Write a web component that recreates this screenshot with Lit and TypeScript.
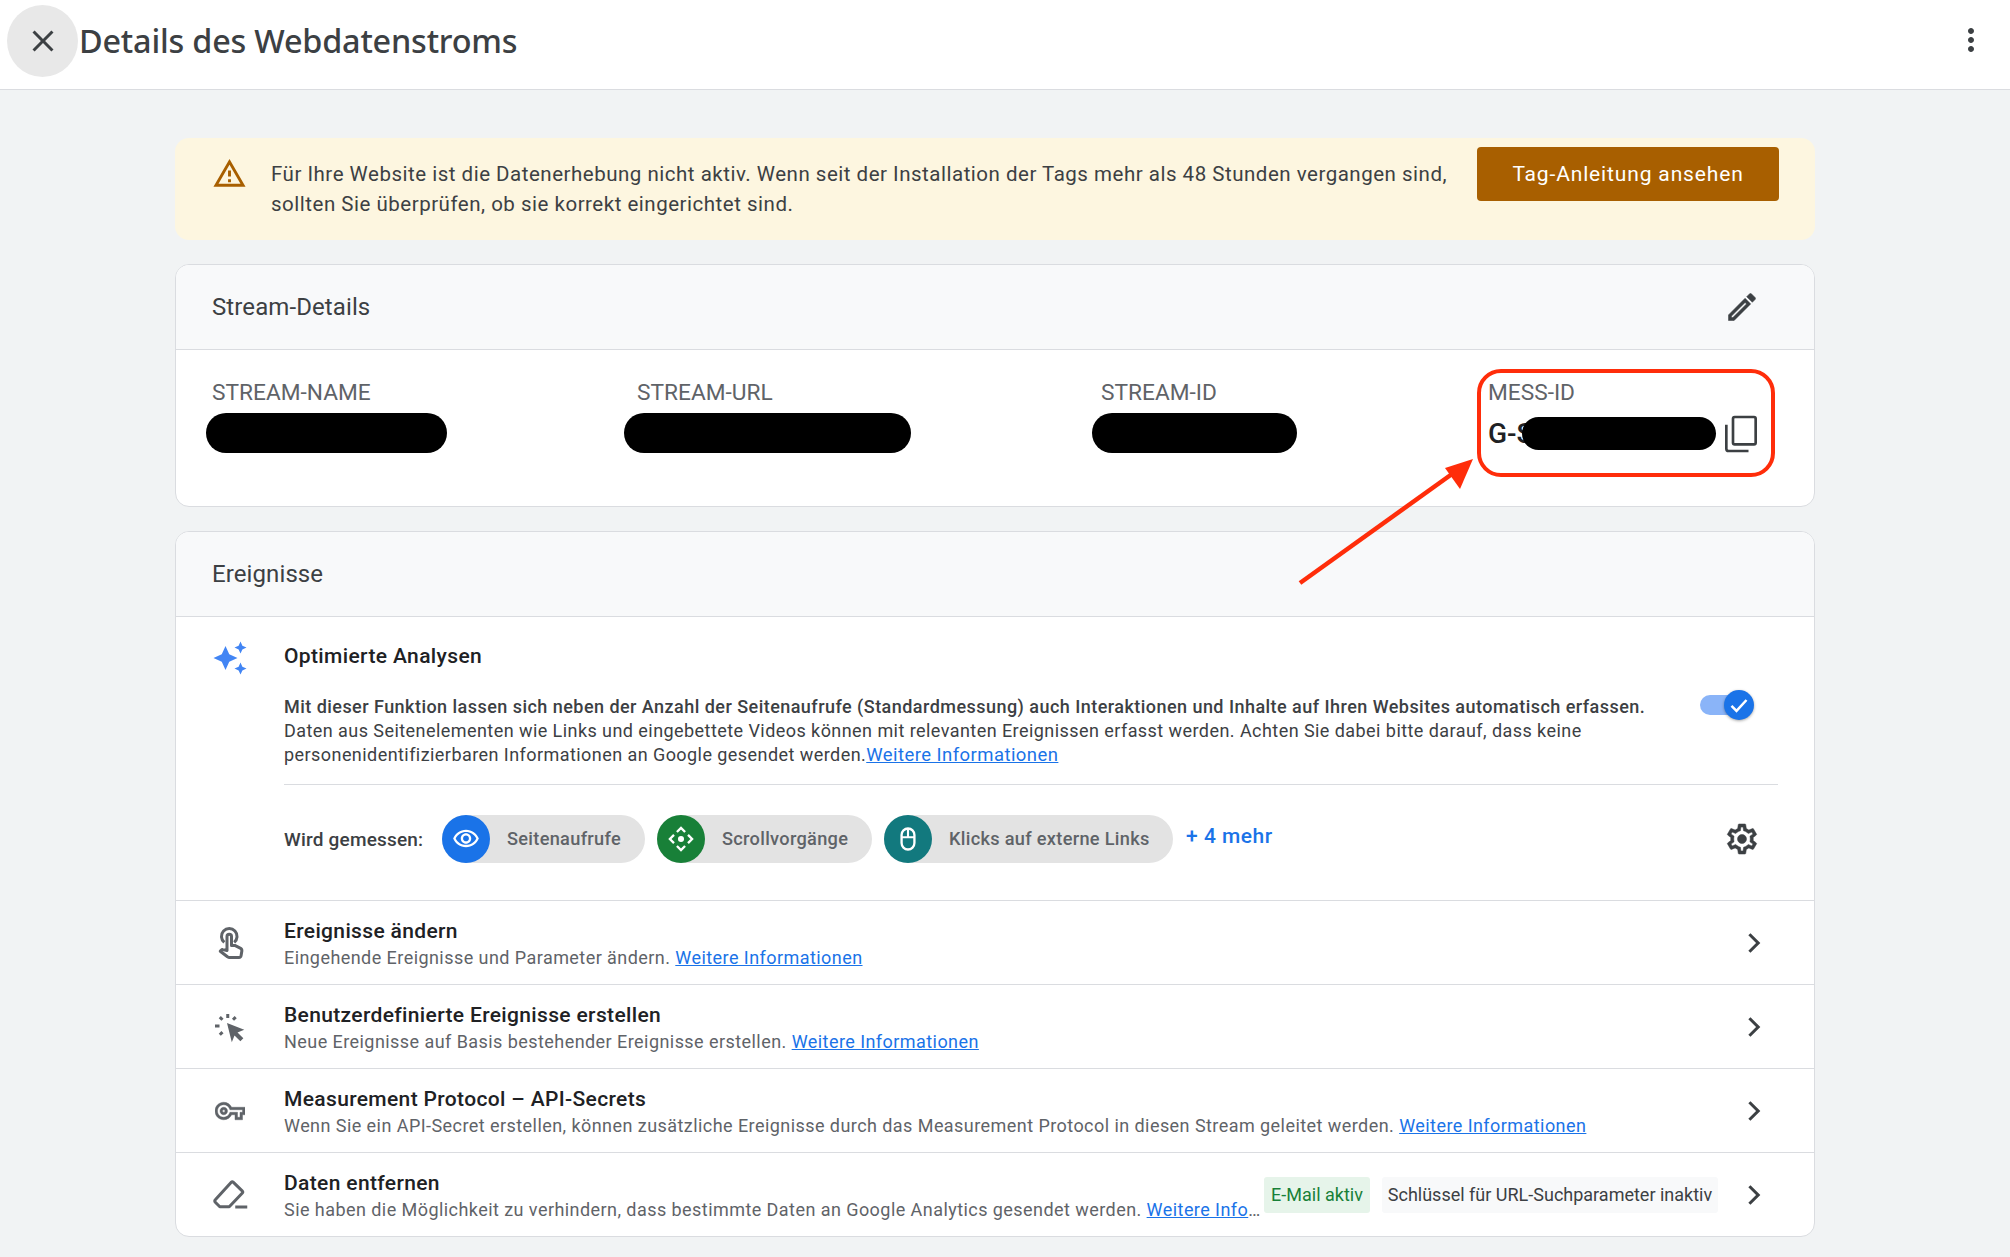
import { LitElement, html, css, svg } from "lit";
import { customElement } from "lit/decorators.js";

const P: Record<string, string> = {
  close: "M19 6.41L17.59 5 12 10.59 6.41 5 5 6.41 10.59 12 5 17.59 6.41 19 12 13.41 17.59 19 19 17.59 13.41 12z",
  warn: "M12 5.99L19.53 19H4.47L12 5.99M12 2L1 21h22L12 2zm1 14h-2v2h2v-2zm0-6h-2v4h2v-4z",
  edit: "M14.06 9.02l.92.92L5.92 19H5v-.92l9.06-9.06M17.66 3c-.25 0-.51.1-.7.29l-1.83 1.83 3.75 3.75 1.83-1.83c.39-.39.39-1.02 0-1.41l-2.34-2.34c-.2-.2-.45-.29-.71-.29zm-3.6 3.19L3 17.25V21h3.75L17.81 9.94l-3.75-3.75z",
  spark: "M19 9l1.25-2.75L23 5l-2.75-1.25L19 1l-1.25 2.75L15 5l2.75 1.25L19 9zm-7.5.5L9 4 6.5 9.5 1 12l5.5 2.5L9 20l2.5-5.5L17 12l-5.5-2.5zM19 15l-1.25 2.75L15 19l2.75 1.25L19 23l1.25-2.75L23 19l-2.75-1.25L19 15z",
  eye: "M12 6c3.79 0 7.17 2.13 8.82 5.5C19.17 14.87 15.79 17 12 17s-7.17-2.13-8.82-5.5C4.83 8.13 8.21 6 12 6m0-2C7 4 2.73 7.11 1 11.5 2.73 15.89 7 19 12 19s9.27-3.11 11-7.5C21.27 7.11 17 4 12 4zm0 5c1.38 0 2.5 1.12 2.5 2.5S13.38 14 12 14s-2.5-1.12-2.5-2.5S10.62 9 12 9m0-2c-2.48 0-4.5 2.02-4.5 4.5S9.52 16 12 16s4.5-2.02 4.5-4.5S14.48 7 12 7z",
  key: "M22 19h-6v-4h-2.68c-1.14 2.42-3.6 4-6.32 4-3.86 0-7-3.14-7-7s3.14-7 7-7c2.72 0 5.17 1.58 6.32 4H24v6h-2v4zm-4-2h2v-4h2v-2H11.94l-.23-.67C11.01 8.34 9.11 7 7 7c-2.76 0-5 2.24-5 5s2.24 5 5 5c2.11 0 4.01-1.34 4.71-3.33l.23-.67H18v4zM7 15c-1.65 0-3-1.35-3-3s1.35-3 3-3 3 1.35 3 3-1.35 3-3 3zm0-4c-.55 0-1 .45-1 1s.45 1 1 1 1-.45 1-1-.45-1-1-1z",
  gear: "M19.43 12.98c.04-.32.07-.64.07-.98 0-.34-.03-.66-.07-.98l2.11-1.65c.19-.15.24-.42.12-.64l-2-3.46c-.09-.16-.26-.25-.44-.25-.06 0-.12.01-.17.03l-2.49 1c-.52-.4-1.08-.73-1.69-.98l-.38-2.65C14.46 2.18 14.25 2 14 2h-4c-.25 0-.46.18-.49.42l-.38 2.65c-.61.25-1.17.59-1.69.98l-2.49-1c-.06-.02-.12-.03-.18-.03-.17 0-.34.09-.43.25l-2 3.46c-.13.22-.07.49.12.64l2.11 1.65c-.04.32-.07.65-.07.98 0 .33.03.66.07.98l-2.11 1.65c-.19.15-.24.42-.12.64l2 3.46c.09.16.26.25.44.25.06 0 .12-.01.17-.03l2.49-1c.52.4 1.08.73 1.69.98l.38 2.65c.03.24.24.42.49.42h4c.25 0 .46-.18.49-.42l.38-2.65c.61-.25 1.17-.59 1.69-.98l2.49 1c.06.02.12.03.18.03.17 0 .34-.09.43-.25l2-3.46c.12-.22.07-.49-.12-.64l-2.11-1.65zm-1.98-1.71c.04.31.05.52.05.73 0 .21-.02.43-.05.73l-.14 1.13.89.7 1.08.84-.7 1.21-1.27-.51-1.04-.42-.9.68c-.43.32-.84.56-1.25.73l-1.06.43-.16 1.13-.2 1.35h-1.4l-.19-1.35-.16-1.13-1.06-.43c-.43-.18-.83-.41-1.23-.71l-.91-.7-1.06.43-1.27.51-.7-1.21 1.08-.84.89-.7-.14-1.13c-.03-.31-.05-.54-.05-.74s.02-.43.05-.73l.14-1.13-.89-.7-1.08-.84.7-1.21 1.27.51 1.04.42.9-.68c.43-.32.84-.56 1.25-.73l1.06-.43.16-1.13.2-1.35h1.39l.19 1.35.16 1.13 1.06.43c.43.18.83.41 1.23.71l.91.7 1.06-.43 1.27-.51.7 1.21-1.07.85-.89.7.14 1.13zM12 9a3 3 0 100 6 3 3 0 000-6z",
  chev: "M8.6 4.6L7 6.2 12.8 12 7 17.8l1.6 1.6L16 12z",
  more: "M12 8c1.1 0 2-.9 2-2s-.9-2-2-2-2 .9-2 2 .9 2 2 2zm0 2c-1.1 0-2 .9-2 2s.9 2 2 2 2-.9 2-2-.9-2-2-2zm0 6c-1.1 0-2 .9-2 2s.9 2 2 2 2-.9 2-2-.9-2-2-2z",
};

const ico = (name: string, size: number, color: string) => html`<svg width=${size} height=${size} viewBox="0 0 24 24" fill=${color} aria-hidden="true"><path d=${P[name]}></path></svg>`;
const icoBold = (name: string, size: number, color: string) => html`<svg width=${size} height=${size} viewBox="0 0 24 24" fill=${color} stroke=${color} stroke-width=".35" aria-hidden="true"><path d=${P[name]}></path></svg>`;

const copyIcon = html`<svg class="copy" width="40" height="40" viewBox="0 0 24 24" fill="none" stroke="#3c4043" stroke-width="1.6"><rect x="7.2" y="1.8" width="13.6" height="16.4" rx="1"></rect><path d="M3.2 6.5V20.8c0 .8.6 1.4 1.4 1.4H16.5"></path></svg>`;
const scrollIcon = html`<svg width="28" height="28" viewBox="0 0 24 24" fill="none" stroke="#fff" stroke-width="2"><path d="M8.5 6L12 2.5 15.5 6M8.5 18l3.5 3.5 3.5-3.5M6 8.5L2.5 12 6 15.5M18 8.5l3.5 3.5-3.5 3.5"></path><circle cx="12" cy="12" r="2.6" fill="#fff" stroke="none"></circle></svg>`;
const mouseIcon = html`<svg width="28" height="28" viewBox="0 0 24 24" fill="none" stroke="#fff" stroke-width="2"><rect x="6.5" y="3" width="11" height="18" rx="5.5"></rect><path d="M12 3v7M6.5 10.5h11" stroke-width="1.8"></path></svg>`;
const touchIcon = html`<svg width="36" height="36" viewBox="0 0 24 24" fill="none" stroke="#5f6368" stroke-width="2" stroke-linejoin="round" aria-hidden="true"><path d="M8.2 11.6a5.2 5.2 0 1 1 6.6 0"></path><path d="M10 7.6a1.5 1.5 0 0 1 3 0v6h2.2l3.6 1.8c.8.4 1.2 1.2 1.1 2l-.5 3c-.1.7-.7 1.2-1.4 1.2H11.3c-.4 0-.7-.1-1-.4L5.5 17.5l.6-.7c.3-.3.7-.5 1.1-.4l2.8.6z"></path></svg>`;
const clickIcon = html`<svg width="36" height="36" viewBox="0 0 24 24" fill="#5f6368" aria-hidden="true"><path d="M10 9.4l11.5 4.4-4.5 1.8 3.9 3.9-2 2-3.9-3.9-1.8 4.5z"></path><g stroke="#5f6368" stroke-width="2" fill="none"><path d="M10.5 3.4v2.6M5.2 5.4l1.8 1.8M2 11.4h3M5.2 17.2l1.8-1.8M15.8 5.4L14 7.2"></path></g></svg>`;
const eraseIcon = html`<svg width="36" height="36" viewBox="0 0 24 24" fill="none" stroke="#5f6368" stroke-width="2" aria-hidden="true"><path d="M14.3 3.6l5.8 5.6c.5.5.5 1.1 0 1.6l-8.6 9H5.2l-3-3c-.5-.5-.5-1.1 0-1.6L12.7 3.6c.5-.4 1.1-.4 1.6 0z" stroke-linejoin="round"></path><path d="M15.5 20h8" stroke-width="2"></path></svg>`;

const arrow = svg`<line x1="1300" y1="583" x2="1452" y2="474" stroke="#ff2d0a" stroke-width="4.5"></line><polygon points="1473,459 1460,489 1445,468" fill="#ff2d0a"></polygon>`;

@customElement("app-root")
export class AppRoot extends LitElement {
  static styles = css`
    :host { display: block; position: relative; width: 2010px; height: 1257px; overflow: hidden; background: #f1f3f4; font-family: Roboto, "Liberation Sans", sans-serif; color: #3c4043; }
    * { box-sizing: border-box; }
    svg { display: block; flex: none; }
    a { color: #1a73e8; text-decoration: underline; }
    .top { height: 90px; background: #fff; border-bottom: 1px solid #dadce0; display: flex; align-items: flex-start; padding-left: 7px; padding-right: 21px; }
    .closebtn { width: 71px; height: 72px; margin-top: 5px; border-radius: 50%; background: #e8e8e8; display: flex; align-items: center; justify-content: center; flex: none; }
    .title { font-family: "Noto Sans", sans-serif; font-size: 32.4px; font-weight: 500; line-height: 80px; color: #3c4043; margin-left: 1px; flex: 1; letter-spacing: -.2px; }
    .more { margin-top: 22px; }
    .main { padding: 48px 195px 0 175px; display: flex; flex-direction: column; gap: 24px; }
    .banner { height: 102px; background: #fdf6e0; border-radius: 14px; display: flex; align-items: flex-start; padding: 9px 36px 0 37px; }
    .banner .warn { margin-top: 9px; }
    .banner p { margin: 12px 0 0 24px; flex: 1; font-size: 20.5px; line-height: 30px; letter-spacing: .51px; color: #3c4043; white-space: nowrap; }
    .btn { width: 302px; height: 54px; background: #a85f00; color: #fff; border-radius: 4px; font-size: 21px; font-weight: 400; letter-spacing: .85px; display: flex; align-items: center; justify-content: center; }
    .card { background: #fff; border: 1px solid #dadce0; border-radius: 14px; overflow: hidden; }
    .cardhead { height: 85px; background: #f8f9fa; border-bottom: 1px solid #dadce0; display: flex; align-items: center; padding: 0 54px 0 36px; font-size: 24px; letter-spacing: .1px; color: #3c4043; justify-content: space-between; }
    .fields { position: relative; height: 156px; display: flex; padding: 29px 0 0 36px; }
    .field { flex: none; }
    .f1 { width: 425px; } .f2 { width: 464px; } .f3 { width: 387px; }
    .label { font-size: 22.7px; line-height: 27px; color: #5f6368; letter-spacing: 0; }
    .pill { background: #000; height: 40px; border-radius: 20px; margin-top: 7px; }
    .p1 { width: 241px; margin-left: -6px; }
    .p2 { width: 287px; margin-left: -13px; }
    .p3 { width: 205px; margin-left: -9px; }
    .messrow { display: flex; align-items: center; margin-top: 9px; height: 36px; font-size: 28px; font-weight: 500; color: #202124; }
    .p4 { width: 194px; height: 33px; margin: 0 5px 0 -12px; flex: none; }
    .copy { margin-top: 2px; }
    .redbox { position: absolute; left: 1301px; top: 19px; width: 298px; height: 108px; border: 4px solid #ff2d0a; border-radius: 24px; }
    .opti { display: flex; padding: 0 36px 0 36px; height: 283px; }
    .opti .ic { width: 72px; flex: none; padding-top: 23px; }
    .opti .body { flex: 1; }
    .opti h3 { margin: 0; font-size: 21px; font-weight: 500; line-height: 24px; padding-top: 27px; color: #202124; letter-spacing: .37px; }
    .opti .txtwrap { display: flex; height: 90px; border-bottom: 1px solid #dadce0; margin-top: 27px; }
    .opti .txt { flex: 1; font-size: 18px; line-height: 24px; letter-spacing: .44px; color: #3c4043; white-space: nowrap; }
    .opti .txt a { font-size: 18.5px; }
    .opti b { font-weight: 500; letter-spacing: .46px; }
    .toggle { position: relative; width: 45px; height: 20px; background: #8ab4f8; border-radius: 10px; margin: 0 33px 0 0; }
    .knob { position: absolute; right: -9px; top: -5px; width: 30px; height: 30px; border-radius: 50%; background: #1a73e8; box-shadow: 0 1px 3px rgba(0,0,0,.35); display: flex; align-items: center; justify-content: center; }
    .measure { display: flex; align-items: center; margin-top: 30px; height: 48px; }
    .mlabel { font-size: 19px; font-weight: 500; letter-spacing: .2px; width: 158px; flex: none; color: #3c4043; }
    .chip { display: flex; align-items: center; height: 48px; background: #e3e3e3; border-radius: 24px; margin-right: 12px; color: #5f6368; font-size: 18.2px; font-weight: 500; letter-spacing: .3px; }
    .chip span { padding-bottom: 2px; }
    .chip .dot { width: 48px; height: 48px; border-radius: 50%; display: flex; align-items: center; justify-content: center; flex: none; margin-right: 17px; }
    .c1 { width: 203px; } .c2 { width: 215px; } .c3 { width: 289px; }
    .mehr { color: #1a73e8; font-size: 21px; font-weight: 500; margin-left: 1px; letter-spacing: .5px; flex: 1; padding-bottom: 6px; }
    .gear { margin-right: 18px; }
    .row { height: 84px; border-top: 1px solid #dadce0; display: flex; align-items: center; padding: 0 46px 0 36px; }
    .row .ic { width: 72px; flex: none; display: flex; }
    .row .ic.key { padding-left: 3px; }
    .row .text { flex: 1; min-width: 0; padding-top: 3px; }
    .row .t { font-size: 21px; font-weight: 500; line-height: 27px; color: #202124; letter-spacing: .35px; }
    .row .s { font-size: 18px; line-height: 26px; color: #5f6368; letter-spacing: .44px; white-space: nowrap; overflow: hidden; text-overflow: ellipsis; }
    .badge { height: 36px; border-radius: 3px; display: flex; align-items: center; justify-content: center; font-size: 18px; flex: none; margin-left: 12px; }
    .green { width: 106px; background: #e6f4ea; color: #188038; margin-left: 3px; }
    .grey { width: 336px; background: #f8f9fa; color: #3c4043; margin-right: 21px; }
    .chev { flex: none; margin-right: -3px; }
    .arrow { position: absolute; left: 0; top: 0; pointer-events: none; }
  `;

  private row(icon: unknown, title: string, sub: unknown, extra: unknown = "", icCls = "ic") {
    return html`<div class="row"><div class=${icCls}>${icon}</div><div class="text"><div class="t">${title}</div><div class="s">${sub}</div></div>${extra}<div class="chev">${ico("chev", 32, "#3c4043")}</div></div>`;
  }

  render() {
    const link = html`<a href="#">Weitere Informationen</a>`;
    return html`
      <div class="top">
        <div class="closebtn">${ico("close", 36, "#3c4043")}</div>
        <div class="title">Details des Webdatenstroms</div>
        <div class="more">${ico("more", 36, "#3c4043")}</div>
      </div>
      <div class="main">
        <div class="banner">
          <div class="warn">${ico("warn", 35, "#a85f00")}</div>
          <p>Für Ihre Website ist die Datenerhebung nicht aktiv. Wenn seit der Installation der Tags mehr als 48 Stunden vergangen sind,<br>sollten Sie überprüfen, ob sie korrekt eingerichtet sind.</p>
          <div class="btn">Tag-Anleitung ansehen</div>
        </div>
        <div class="card">
          <div class="cardhead"><span>Stream-Details</span>${icoBold("edit", 36, "#3c4043")}</div>
          <div class="fields">
            <div class="field f1"><div class="label">STREAM-NAME</div><div class="pill p1"></div></div>
            <div class="field f2"><div class="label">STREAM-URL</div><div class="pill p2"></div></div>
            <div class="field f3"><div class="label">STREAM-ID</div><div class="pill p3"></div></div>
            <div class="field">
              <div class="label">MESS-ID</div>
              <div class="messrow"><span>G-S</span><div class="pill p4"></div>${copyIcon}</div>
            </div>
            <div class="redbox"></div>
          </div>
        </div>
        <div class="card">
          <div class="cardhead">Ereignisse</div>
          <div class="opti">
            <div class="ic">${ico("spark", 36, "#4285f4")}</div>
            <div class="body">
              <h3>Optimierte Analysen</h3>
              <div class="txtwrap">
                <div class="txt"><b>Mit dieser Funktion lassen sich neben der Anzahl der Seitenaufrufe (Standardmessung) auch Interaktionen und Inhalte auf Ihren Websites automatisch erfassen.</b><br>Daten aus Seitenelementen wie Links und eingebettete Videos können mit relevanten Ereignissen erfasst werden. Achten Sie dabei bitte darauf, dass keine<br>personenidentifizierbaren Informationen an Google gesendet werden.${link}</div>
                <div class="toggle"><div class="knob"><svg width="20" height="20" viewBox="0 0 24 24" fill="none" stroke="#fff" stroke-width="3"><path d="M3 13l6 6L21 6"></path></svg></div></div>
              </div>
              <div class="measure">
                <div class="mlabel">Wird gemessen:</div>
                <div class="chip c1"><div class="dot" style="background:#1a73e8">${ico("eye", 28, "#fff")}</div><span>Seitenaufrufe</span></div>
                <div class="chip c2"><div class="dot" style="background:#188038">${scrollIcon}</div><span>Scrollvorgänge</span></div>
                <div class="chip c3"><div class="dot" style="background:#12797e">${mouseIcon}</div><span>Klicks auf externe Links</span></div>
                <div class="mehr">+ 4 mehr</div>
                <div class="gear">${icoBold("gear", 36, "#3c4043")}</div>
              </div>
            </div>
          </div>
          ${this.row(touchIcon, "Ereignisse ändern", html`Eingehende Ereignisse und Parameter ändern. ${link}`)}
          ${this.row(clickIcon, "Benutzerdefinierte Ereignisse erstellen", html`Neue Ereignisse auf Basis bestehender Ereignisse erstellen. ${link}`)}
          ${this.row(icoBold("key", 30, "#5f6368"), "Measurement Protocol – API-Secrets", html`Wenn Sie ein API-Secret erstellen, können zusätzliche Ereignisse durch das Measurement Protocol in diesen Stream geleitet werden. ${link}`, "", "ic key")}
          ${this.row(eraseIcon, "Daten entfernen", html`Sie haben die Möglichkeit zu verhindern, dass bestimmte Daten an Google Analytics gesendet werden. ${link}`, html`<div class="badge green">E-Mail aktiv</div><div class="badge grey">Schlüssel für URL-Suchparameter inaktiv</div>`)}
        </div>
      </div>
      <svg class="arrow" width="2010" height="1257" viewBox="0 0 2010 1257">${arrow}</svg>
    `;
  }
}
